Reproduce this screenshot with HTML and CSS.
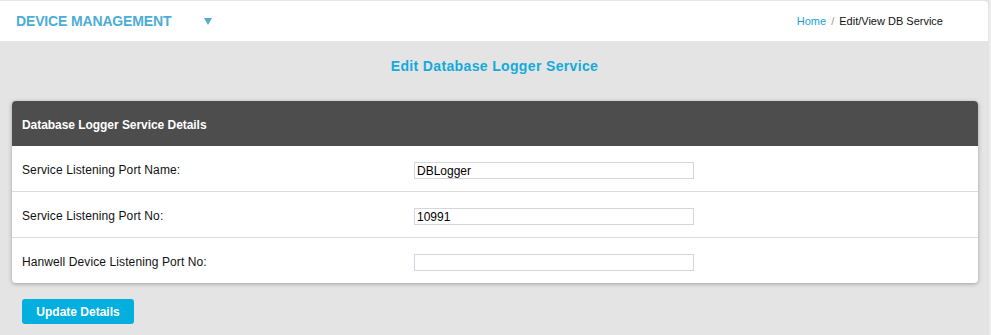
FILE: index.html
```html
<!DOCTYPE html>
<html>
<head>
<meta charset="utf-8">
<link rel="stylesheet" href="styles.css">
</head>
<body>
<div class="topbar">
  <div class="brand">
    <span class="brand-title">DEVICE MANAGEMENT</span>
    <span class="caret"></span>
  </div>
  <div class="crumbs">
    <a class="crumb-link">Home</a>
    <span class="crumb-sep">/</span>
    <span class="crumb-current">Edit/View DB Service</span>
  </div>
</div>
<h1 class="page-title">Edit Database Logger Service</h1>
<div class="panel">
  <div class="panel-head">Database Logger Service Details</div>
  <div class="row">
    <label class="row-label">Service Listening Port Name:</label>
    <input class="row-input" type="text" value="DBLogger">
  </div>
  <div class="row">
    <label class="row-label">Service Listening Port No:</label>
    <input class="row-input" type="text" value="10991">
  </div>
  <div class="row">
    <label class="row-label">Hanwell Device Listening Port No:</label>
    <input class="row-input" type="text" value="">
  </div>
</div>
<div class="actions">
  <button class="btn">Update Details</button>
</div>
</body>
</html>
```

FILE: styles.css
```css
* { box-sizing: border-box; }
html, body {
  margin: 0;
  padding: 0;
  background: #e4e4e4;
  font-family: "Liberation Sans", Arial, sans-serif;
  height: 335px;
  overflow: hidden;
}
body {
  padding-top: 1px;
  border-right: 2px solid #ececec;
  width: 991px;
}
.topbar {
  background: #fff;
  height: 40px;
  width: 988px;
  border-top-right-radius: 4px;
  display: flex;
  align-items: center;
  justify-content: space-between;
  padding: 0 0 0 16px;
}
.brand {
  display: flex;
  align-items: center;
}
.brand-title {
  color: #4cadd8;
  font-weight: bold;
  font-size: 14px;
  letter-spacing: -0.15px;
}
.caret {
  width: 0;
  height: 0;
  border-left: 4.5px solid transparent;
  border-right: 4.5px solid transparent;
  border-top: 7px solid #4cadd8;
  margin-left: 33px;
}
.crumbs {
  font-size: 11px;
  margin-right: 45px;
}
.crumb-link { color: #1a9fd9; }
.crumb-sep { color: #999; margin: 0 2px; }
.crumb-current { color: #111; }
.page-title {
  margin: 0;
  text-align: center;
  font-size: 14px;
  font-weight: bold;
  color: #13aadb;
  padding-top: 17px;
  height: 60px;
  letter-spacing: 0.35px;
}
.panel {
  margin-left: 12px;
  width: 966px;
  background: #fff;
  border-radius: 4px;
  box-shadow: 0 1px 4px rgba(0,0,0,0.3);
  overflow: hidden;
}
.panel-head {
  background: #4d4d4d;
  color: #fff;
  font-weight: bold;
  font-size: 12px;
  height: 45px;
  padding: 17px 10px 0;
  letter-spacing: -0.05px;
}
.row {
  display: flex;
  align-items: center;
  height: 46px;
  padding: 3px 10px 0;
  border-top: 1px solid #dcdcdc;
}
.panel-head + .row { border-top: none; height: 45px; }
.row-label {
  font-size: 12px;
  color: #111;
  width: 392px;
  letter-spacing: 0.1px;
}
.row-input {
  width: 280px;
  height: 17px;
  border: 1px solid #d3d6e0;
  font-family: "Liberation Sans", Arial, sans-serif;
  font-size: 12px;
  padding: 0 2px;
  color: #000;
  margin-top: 1px;
}
.actions {
  padding: 16px 0 0 22px;
}
.btn {
  background: #03afdf;
  color: #fff;
  border: none;
  border-radius: 3px;
  font-family: "Liberation Sans", Arial, sans-serif;
  font-weight: bold;
  font-size: 12px;
  width: 112px;
  height: 25px;
  padding: 0;
}
```
